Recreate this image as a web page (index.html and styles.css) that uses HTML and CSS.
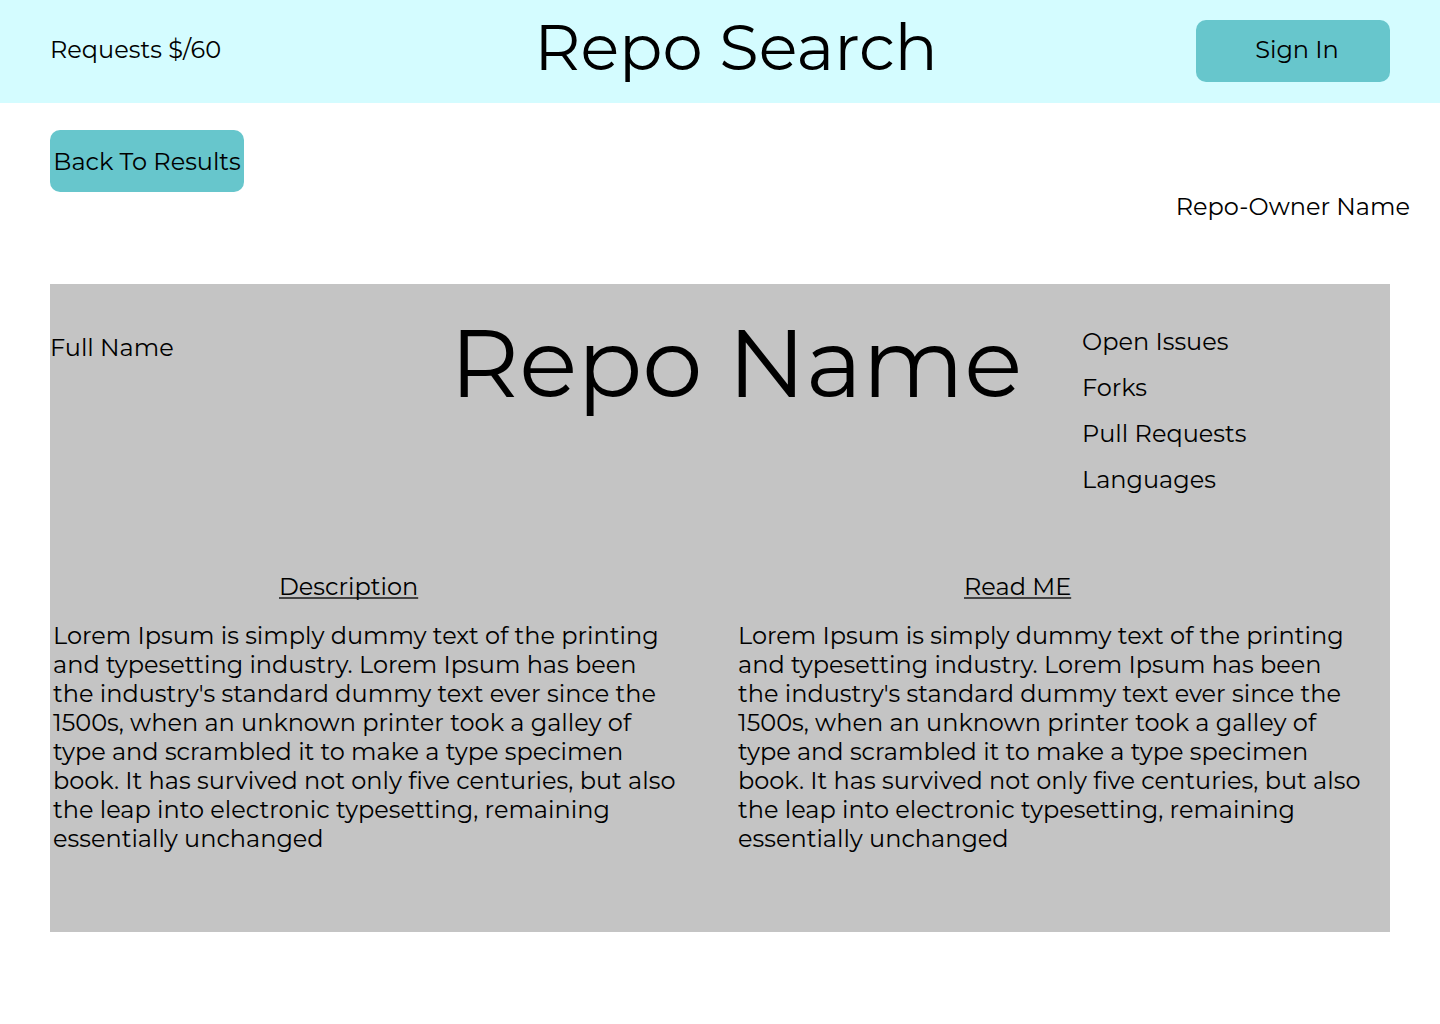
FILE: index.html
```html
<!DOCTYPE html>
<html lang="en">
<head>
  <meta charset="utf-8">
  <meta name="viewport" content="width=device-width, initial-scale=1">
  <title>Repo Search</title>
  <link rel="stylesheet" href="styles.css">
</head>
<body>
  <header class="site-header">
    <p class="requests">Requests $/60</p>
    <h1 class="site-title">Repo Search</h1>
    <button class="button sign-in" type="button">Sign In</button>
  </header>
  <main class="page">
    <div class="toolbar">
      <button class="button" type="button">Back To Results</button>
      <p class="owner">Repo-Owner Name</p>
    </div>
    <article class="repo">
      <div class="repo-top">
        <p class="full-name">Full Name</p>
        <h2 class="repo-name">Repo Name</h2>
        <ul class="stats">
          <li>Open Issues</li>
          <li>Forks</li>
          <li>Pull Requests</li>
          <li>Languages</li>
        </ul>
      </div>
      <div class="repo-details">
        <section class="detail">
          <h3 class="detail-title">Description</h3>
          <p class="detail-text">Lorem Ipsum is simply dummy text of the printing and typesetting industry. Lorem Ipsum has been the industry's standard dummy text ever since the 1500s, when an unknown printer took a galley of type and scrambled it to make a type specimen book. It has survived not only five centuries, but also the leap into electronic typesetting, remaining essentially unchanged</p>
        </section>
        <section class="detail">
          <h3 class="detail-title">Read ME</h3>
          <p class="detail-text">Lorem Ipsum is simply dummy text of the printing and typesetting industry. Lorem Ipsum has been the industry's standard dummy text ever since the 1500s, when an unknown printer took a galley of type and scrambled it to make a type specimen book. It has survived not only five centuries, but also the leap into electronic typesetting, remaining essentially unchanged</p>
        </section>
      </div>
    </article>
  </main>
</body>
</html>
```
FILE: styles.css
```css
* {
  box-sizing: border-box;
}

body,
h1,
h2,
h3,
p,
ul {
  margin: 0;
  padding: 0;
}

body {
  background: #fff;
  color: #000;
  font-family: Montserrat, Inter, sans-serif;
  font-size: 24px;
  font-weight: 400;
  line-height: 29px;
}

h1,
h2,
h3 {
  font-weight: 400;
}

.site-header {
  display: grid;
  grid-template-columns: 1fr auto 1fr;
  align-items: start;
  padding: 8px 50px 17px;
  background: #d4fcff;
}

.requests {
  padding-top: 27px;
}

.site-title {
  padding-left: 32px;
  font-size: 64px;
  line-height: 78px;
}

.button {
  width: 194px;
  height: 62px;
  padding: 0;
  border: 0;
  border-radius: 10px;
  background: #67c6cc;
  color: inherit;
  font: inherit;
  white-space: nowrap;
  cursor: pointer;
}

.sign-in {
  justify-self: end;
  margin-top: 12px;
  padding: 0 0 4px 8px;
}

.page {
  padding: 27px 50px 92px;
}

.toolbar {
  display: flex;
  justify-content: space-between;
  margin-right: -20px;
}

.owner {
  padding-top: 62px;
}

.repo {
  margin-top: 63px;
  padding-bottom: 79px;
  background: #c4c4c4;
}

.repo-top {
  display: grid;
  grid-template-columns: 308px 1fr 308px;
  min-height: 288px;
}

.full-name {
  padding-top: 49px;
}

.repo-name {
  padding-top: 20px;
  padding-left: 32px;
  font-size: 96px;
  line-height: 117px;
  text-align: center;
  white-space: nowrap;
}

.stats {
  display: grid;
  align-content: start;
  gap: 17px;
  padding-top: 43px;
  list-style: none;
}

.repo-details {
  display: grid;
  grid-template-columns: 1fr 1fr;
  gap: 60px;
  padding: 0 27px 0 3px;
}

.detail-title {
  padding-left: 226px;
  font-size: inherit;
  line-height: inherit;
  text-decoration: underline #444;
  text-decoration-thickness: 2px;
  text-decoration-skip-ink: none;
  text-underline-offset: 2px;
}

.detail-text {
  margin-top: 20px;
}
```
